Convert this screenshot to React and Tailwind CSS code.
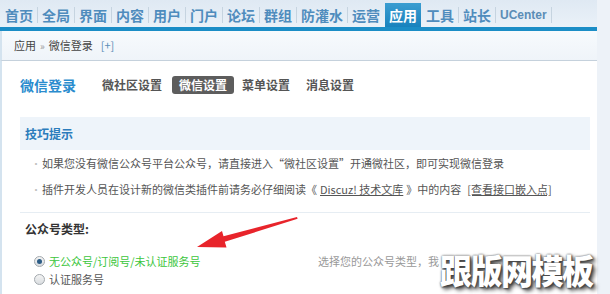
import React from "react";

const navItems = ["首页", "全局", "界面", "内容", "用户", "门户", "论坛", "群组", "防灌水", "运营", "应用", "工具", "站长"];

function Radio({ checked }) {
  return (
    <span className="w-[11px] h-[11px] rounded-full border border-[#a3a9ae] bg-gradient-to-b from-[#f4f4f4] to-[#d9dde0] flex items-center justify-center shrink-0">
      {checked && <span className="w-[5px] h-[5px] rounded-full bg-[#2c5c85]"></span>}
    </span>
  );
}

export default function App() {
  return (
    <div className="relative w-[610px] h-[294px] overflow-hidden bg-[#edf2f8] font-['Noto_Sans_CJK_SC',sans-serif]">
      <div className="w-[597px]">
        {/* 顶部导航 */}
        <div className="flex items-center h-[27px] pt-[3px] pl-[1px] bg-gradient-to-b from-[#dfe9f3] to-[#eaf1f8]">
          {navItems.map((item, i) => (
            <React.Fragment key={item}>
              {i > 0 && item !== "应用" && navItems[i - 1] !== "应用" && (
                <span className="w-px h-[16px] bg-[#c6d4e0]"></span>
              )}
              {(item === "应用" || navItems[i - 1] === "应用") && <span className="w-px"></span>}
              <span
                className={`h-[24px] px-[4px] flex items-center text-[14px] leading-none font-semibold ${
                  item === "应用"
                    ? "bg-gradient-to-b from-[#3a9dd1] to-[#1782bd] text-white"
                    : "text-[#4f8cbd]"
                }`}
              >
                {item}
              </span>
            </React.Fragment>
          ))}
          <span className="w-px h-[16px] bg-[#c6d4e0]"></span>
          <span className="h-[24px] px-[4px] flex items-center text-[12px] font-bold text-[#5b8db6] font-['Liberation_Sans',sans-serif]">
            UCenter
          </span>
          <span className="w-px h-[16px] bg-[#c6d4e0]"></span>
        </div>
        <div className="h-[4px] bg-[#1b8dc6]"></div>

        {/* 面包屑 */}
        <div className="h-[30px] flex items-center pl-[12px] bg-gradient-to-b from-[#f7fafd] to-[#eff4f9] border-b border-[#c5d1dc] border-l-2 border-l-[#d4e3ef] text-[11px] text-[#444]">
          应用 <span className="mx-[4px] text-[#999] text-[10px]">»</span> 微信登录
          <span className="ml-[8px] text-[#5b8db6]">[+]</span>
        </div>

        {/* 内容 */}
        <div className="h-[233px] bg-white border-l-2 border-[#d4e3ef] pl-[18px] pr-[7px] pt-[15px]">
          <div className="flex items-center h-[18px]">
            <span className="text-[14px] font-bold text-[#2a8cce] mr-[19px]">微信登录</span>
            <span className="px-[7px] mr-[3px] text-[12px] font-bold text-[#555]">微社区设置</span>
            <span className="h-[18px] px-[7px] mr-[1px] flex items-center rounded-[3px] bg-[#5d5d5d] text-[12px] font-bold text-white">
              微信设置
            </span>
            <span className="px-[7px] mr-[2px] text-[12px] font-bold text-[#555]">菜单设置</span>
            <span className="px-[7px] text-[12px] font-bold text-[#555]">消息设置</span>
          </div>

          {/* 技巧提示 */}
          <div className="mt-[23px]">
            <div className="h-[33px] flex items-center pl-[5px] bg-[#eef4fa] text-[12px] font-bold text-[#2b7cbc]">
              技巧提示
            </div>
            <ul className="text-[11px] text-[#555]">
              <li className="h-[26px] flex items-center pl-[11px]">
                <span className="w-[11px] text-[#c0c0c0] text-[10px]">•</span>
                如果您没有微信公众号平台公众号，请直接进入“微社区设置”开通微社区，即可实现微信登录
              </li>
              <li className="h-[26px] flex items-center pl-[11px]">
                <span className="w-[11px] text-[#c0c0c0] text-[10px]">•</span>
                插件开发人员在设计新的微信类插件前请务必仔细阅读《
                <span className="underline mx-[3px]">Discuz! 技术文库</span>》中的内容
                <span className="underline ml-[6px]">[查看接口嵌入点]</span>
              </li>
            </ul>
          </div>

          <div className="mt-[10px] border-t border-[#e6edf3]">
            <div className="h-[32px] flex items-center pl-[5px] text-[12px] font-bold text-[#333]">公众号类型:</div>
            <div className="mt-[7px] pl-[14px] text-[11px]">
              <div className="h-[18px] flex items-center">
                <div className="w-[284px] flex items-center gap-[4px]">
                  <Radio checked />
                  <span className="text-[#3cc63c]">无公众号/订阅号/未认证服务号</span>
                </div>
                <span className="text-[#999]">选择您的公众号类型，我</span>
              </div>
              <div className="h-[18px] flex items-center gap-[4px]">
                <Radio />
                <span className="text-[#555]">认证服务号</span>
              </div>
            </div>
          </div>
        </div>
      </div>

      {/* 红色箭头 */}
      <svg className="absolute left-0 top-0 pointer-events-none" width="610" height="294" viewBox="0 0 610 294">
        <polygon
          points="197,247 222,231 223.5,236.3 297,217 297.6,218.8 224.8,241.7 226.5,247.5"
          fill="#e8242b"
        />
      </svg>

      {/* 水印 */}
      <div className="absolute left-[440px] top-[252px] text-[32px] leading-[34px] font-black text-white tracking-[-1.5px] scale-y-[1.08] [text-shadow:0_0_2px_#555,1px_1px_2px_#333,3px_3px_4px_#444]">
        跟版网模板
      </div>
    </div>
  );
}
